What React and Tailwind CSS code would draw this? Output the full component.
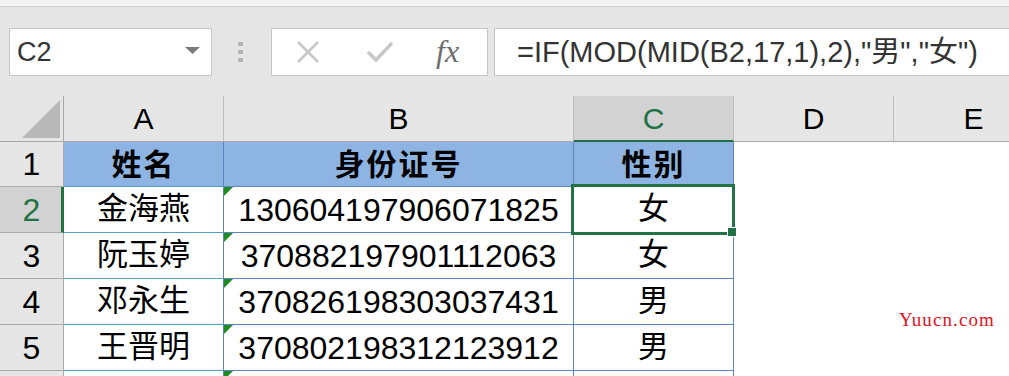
import React from "react";

const latin = { fontFamily: '"Liberation Sans", Arial, "Noto Sans CJK SC", sans-serif' };
const cjk = { fontFamily: '"Liberation Sans", "Noto Sans CJK SC", sans-serif' };

const rows = [
  { n: "2", name: "金海燕", id: "130604197906071825", sex: "女" },
  { n: "3", name: "阮玉婷", id: "370882197901112063", sex: "女" },
  { n: "4", name: "邓永生", id: "370826198303037431", sex: "男" },
  { n: "5", name: "王晋明", id: "370802198312123912", sex: "男" },
];

function Tri() {
  return (
    <svg className="absolute left-0 top-0" width="9" height="9" viewBox="0 0 9 9">
      <polygon points="0,0 9,0 0,9" fill="#1e8c1e" />
    </svg>
  );
}

export default function App() {
  return (
    <div className="relative w-[1009px] h-[376px] overflow-hidden bg-white flex flex-col" style={latin}>
      {/* top strip */}
      <div className="h-[7px] shrink-0 bg-[#f3f3f3] border-b border-[#d0d0d0]" />
      {/* formula toolbar */}
      <div className="h-[89px] shrink-0 bg-[#e6e6e6] flex items-start pt-[21px] pl-[9px]">
        <div className="w-[203px] h-[48px] shrink-0 bg-white border border-[#c6c6c6] flex items-center justify-between pl-[7px] pr-[11px]">
          <span className="text-[27px] text-[#333] leading-none">C2</span>
          <svg width="15" height="8" viewBox="0 0 15 8" className="mt-[-2px]">
            <polygon points="0,0 15,0 7.5,7" fill="#7a7a7a" />
          </svg>
        </div>
        <div className="ml-[26px] mt-[14px] shrink-0 flex flex-col gap-[4px]">
          <div className="w-[5px] h-[4px] bg-[#b4b4b4]" />
          <div className="w-[5px] h-[4px] bg-[#b4b4b4]" />
          <div className="w-[5px] h-[4px] bg-[#b4b4b4]" />
        </div>
        <div className="ml-[28px] w-[217px] h-[48px] shrink-0 bg-white border border-[#c6c6c6] flex items-center pl-[24px]">
          <svg width="24" height="24" viewBox="0 0 24 24" className="shrink-0">
            <path d="M2 2 L22 22 M22 2 L2 22" stroke="#c8c8c8" strokeWidth="2.6" fill="none" />
          </svg>
          <svg width="27" height="22" viewBox="0 0 27 22" className="ml-[47px] shrink-0">
            <path d="M1 11 L9 19 L25 2" stroke="#c8c8c8" strokeWidth="3.4" fill="none" />
          </svg>
          <span
            className="ml-[42px] text-[32px] italic text-[#6e6e6e] leading-none mt-[-2px]"
            style={{ fontFamily: '"Liberation Serif", "Times New Roman", serif' }}
          >
            fx
          </span>
        </div>
        <div className="ml-[6px] w-[530px] h-[48px] shrink-0 bg-white border border-[#c6c6c6] flex items-center pl-[22px]">
          <span className="text-[29px] text-[#333] leading-none whitespace-nowrap" style={cjk}>
            =IF(MOD(MID(B2,17,1),2),"男","女")
          </span>
        </div>
      </div>

      {/* grid */}
      <div className="grid grid-cols-[64px_160px_350px_160px_160px_160px] grid-rows-[46px_45px_46px_46px_46px_46px_1fr] flex-1 w-[1054px]">
        {/* header row */}
        <div className="relative bg-[#e6e6e6] border-r border-b border-[#a8a8a8]">
          <svg className="absolute left-0 top-0" width="63" height="45" viewBox="0 0 63 45">
            <polygon points="60,4 60,42 22,42" fill="#b8b8b8" />
          </svg>
        </div>
        <div className="bg-[#e6e6e6] border-r border-r-[#bdbdbd] border-b border-b-[#a8a8a8] flex items-center justify-center text-[30px] text-black">A</div>
        <div className="bg-[#e6e6e6] border-r border-r-[#bdbdbd] border-b border-b-[#a8a8a8] flex items-center justify-center text-[30px] text-black">B</div>
        <div className="bg-[#d2d2d2] border-r border-r-[#bdbdbd] border-b-2 border-b-[#217346] flex items-center justify-center text-[30px] text-[#217346]">C</div>
        <div className="bg-[#e6e6e6] border-r border-r-[#bdbdbd] border-b border-b-[#a8a8a8] flex items-center justify-center text-[30px] text-black">D</div>
        <div className="bg-[#e6e6e6] border-r border-r-[#bdbdbd] border-b border-b-[#a8a8a8] flex items-center justify-center text-[30px] text-black">E</div>

        {/* row 1 */}
        <div className="bg-[#e6e6e6] border-r border-b border-[#ababab] flex items-center justify-center text-[32px] text-black">1</div>
        <div className="bg-[#8db4e2] border-r border-r-[#5b86c2] border-b border-b-[#4fa2c6] flex items-center justify-center text-[30px] font-bold text-black tracking-[2px]" style={cjk}>姓名</div>
        <div className="bg-[#8db4e2] border-r border-b border-[#5b86c2] flex items-center justify-center text-[30px] font-bold text-black tracking-[2px]" style={cjk}>身份证号</div>
        <div className="bg-[#8db4e2] border-r border-b border-[#5b86c2] flex items-center justify-center text-[30px] font-bold text-black tracking-[2px]" style={cjk}>性别</div>
        <div className="bg-white" />
        <div className="bg-white" />

        {rows.map((r, i) => {
          const sel = i === 0;
          return (
            <React.Fragment key={r.n}>
              <div
                className={
                  sel
                    ? "bg-[#d2d2d2] border-r-[3px] border-r-[#217346] border-b border-b-[#ababab] flex items-center justify-center text-[32px] text-[#217346] pl-[2px]"
                    : "bg-[#e6e6e6] border-r border-b border-[#ababab] flex items-center justify-center text-[32px] text-black"
                }
              >
                {r.n}
              </div>
              <div className="bg-white border-r border-r-[#5b86c2] border-b border-b-[#4fa2c6] flex items-center justify-center text-[31px] text-black" style={cjk}>
                {r.name}
              </div>
              <div className="relative bg-white border-r border-b border-[#5b86c2] flex items-center justify-center text-[32px] text-black">
                <Tri />
                {r.id}
              </div>
              <div className="relative bg-white border-r border-b border-[#5b86c2] flex items-center justify-center text-[31px] text-black" style={cjk}>
                {r.sex}
                {sel && (
                  <>
                    <div className="absolute left-[-3px] top-[-3px] right-[-2px] bottom-[-3px] border-[3px] border-[#217346] z-10" />
                    <div className="absolute right-[-4px] bottom-[-5px] w-[10px] h-[10px] bg-[#217346] border border-white z-20" />
                  </>
                )}
              </div>
              <div className="bg-white" />
              <div className="bg-white" />
            </React.Fragment>
          );
        })}

        {/* row 6 (partial) */}
        <div className="bg-[#e6e6e6] border-r border-[#ababab]" />
        <div className="bg-white border-r border-r-[#5b86c2]" />
        <div className="relative bg-white border-r border-[#5b86c2]">
          <Tri />
        </div>
        <div className="bg-white border-r border-[#5b86c2]" />
        <div className="bg-white" />
        <div className="bg-white" />
      </div>

      {/* watermark */}
      <div
        className="absolute left-[899px] top-[310px] text-[19px] text-[#e8101c] tracking-[1.1px] leading-none"
        style={{ fontFamily: '"Liberation Serif", "Times New Roman", serif' }}
      >
        Yuucn.com
      </div>
    </div>
  );
}
